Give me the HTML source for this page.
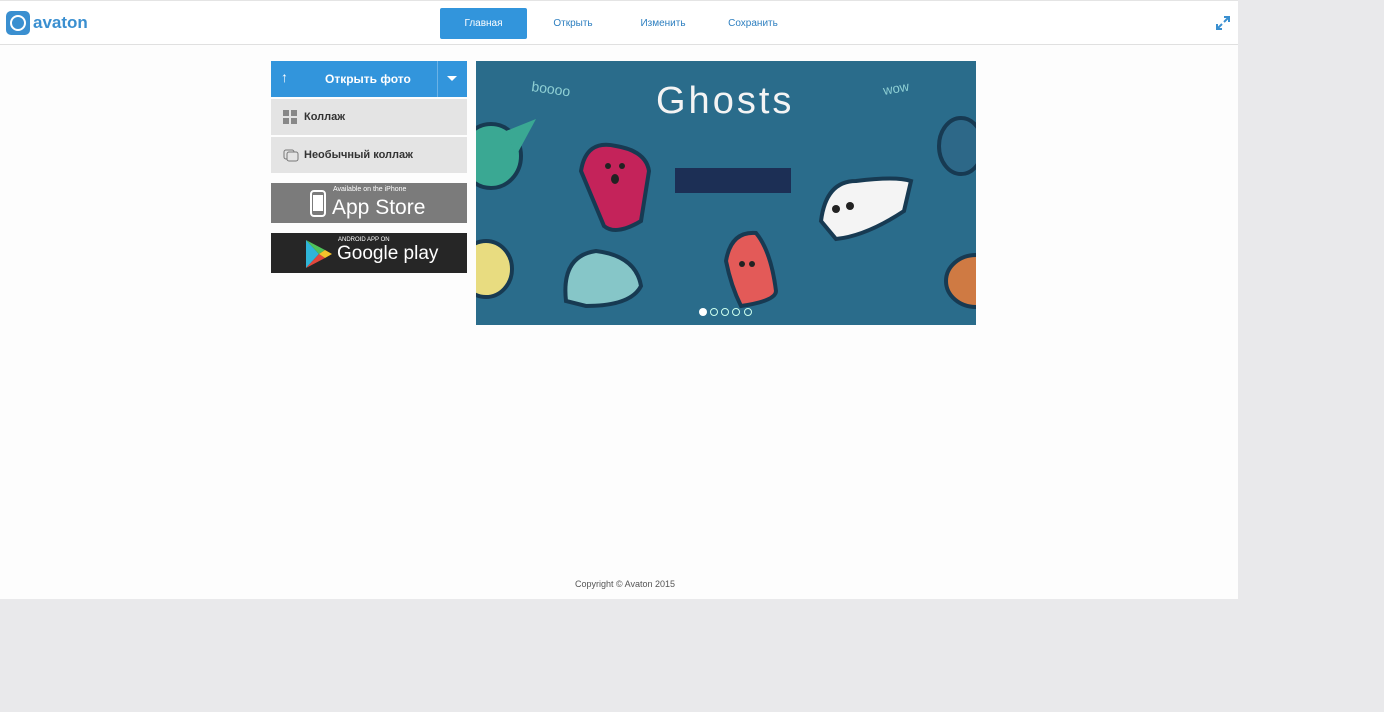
<!DOCTYPE html>
<html><head><meta charset="utf-8"><style>
*{margin:0;padding:0;box-sizing:border-box}
body{width:1384px;height:712px;background:#e9e9eb;font-family:"Liberation Sans",sans-serif;position:relative;overflow:hidden}
#page{position:absolute;left:0;top:0;width:1238px;height:599px;background:#fdfdfd}
#hdr{position:absolute;left:0;top:0;width:1238px;height:45px;border-bottom:1px solid #e0e0e0;border-top:1px solid #e4e4e4;background:#fff}
.logo{position:absolute;left:6px;top:10px;display:flex;align-items:center}
.logo .ic{width:24px;height:24px;border-radius:5px;background:#3a8fd0;position:relative}
.logo .ic:after{content:"";position:absolute;left:4px;top:4px;width:12px;height:12px;border:2.5px solid #fff;border-radius:50%}
.logo span{font-weight:bold;color:#3a8fd0;font-size:17px;margin-left:3px}
.nav{position:absolute;top:7px;height:31px;font-size:10px;color:#2d7fc0;line-height:31px;text-align:center}
.nav.a{background:#3295dc;color:#fff;border-radius:2px}
.btn{position:absolute;left:271px;width:196px}
.lst{background:#e4e4e4;height:36px;font-size:11px;color:#333;font-weight:bold;display:flex;align-items:center;padding-left:12px}
.foot{position:absolute;left:575px;top:579px;font-size:9px;color:#555}
</style></head><body>
<div id="page">
<div id="hdr">
<div class="logo"><div class="ic"></div><span>avaton</span></div>
<div class="nav a" style="left:440px;width:87px">Главная</div>
<div class="nav" style="left:545px;width:56px">Открыть</div>
<div class="nav" style="left:633px;width:60px">Изменить</div>
<div class="nav" style="left:722px;width:62px">Сохранить</div>
<svg style="position:absolute;left:1215px;top:14px" width="16" height="16" viewBox="0 0 16 16"><path d="M9 2h5v5M14 2l-5 5M7 14H2V9M2 14l5-5" stroke="#3a8fd0" stroke-width="2" fill="none"/></svg>
</div>

<div class="btn" style="top:61px;height:36px;background:#3295dc;color:#fff;font-size:12px;font-weight:bold">
<span style="position:absolute;left:10px;top:8px;font-size:14px">&#8593;</span>
<span style="position:absolute;left:54px;top:11px">Открыть фото</span>
<div style="position:absolute;left:166px;top:0;width:1px;height:36px;background:#6bb2e6"></div>
<span style="position:absolute;left:176px;top:15px;border:5px solid transparent;border-top:5px solid #fff"></span>
</div>
<div class="btn lst" style="top:99px"><svg width="14" height="14" style="margin-right:7px"><rect x="0" y="0" width="6" height="6" fill="#888"/><rect x="8" y="0" width="6" height="6" fill="#888"/><rect x="0" y="8" width="6" height="6" fill="#888"/><rect x="8" y="8" width="6" height="6" fill="#888"/></svg>Коллаж</div>
<div class="btn lst" style="top:137px"><svg width="16" height="14" style="margin-right:5px"><rect x="1" y="2" width="10" height="9" rx="2" fill="none" stroke="#777"/><rect x="4" y="4" width="11" height="9" rx="2" fill="#e4e4e4" stroke="#777"/></svg>Необычный коллаж</div>
<div class="btn" style="top:183px;height:40px;background:#7b7b7b;color:#fff">
<svg style="position:absolute;left:39px;top:7px" width="16" height="27"><rect x="1" y="1" width="14" height="25" rx="3" fill="none" stroke="#fff" stroke-width="2"/><rect x="3" y="5" width="10" height="16" fill="#fff"/></svg>
<span style="position:absolute;left:62px;top:3px;font-size:7px">Available on the iPhone</span>
<span style="position:absolute;left:61px;top:13px;font-size:21px">App Store</span>
</div>
<div class="btn" style="top:233px;height:40px;background:#262626;color:#fff">
<svg style="position:absolute;left:34px;top:6px" width="28" height="30"><polygon points="1,1 1,29 14,15" fill="#2fb5d8"/><polygon points="1,1 20,11 14,15" fill="#4fc25a"/><polygon points="1,29 20,19 14,15" fill="#e2473c"/><polygon points="20,11 27,15 20,19 14,15" fill="#f5c32b"/></svg>
<span style="position:absolute;left:67px;top:4px;font-size:6px">ANDROID APP ON</span>
<span style="position:absolute;left:66px;top:10px;font-size:19px">Google play</span>
</div>

<svg style="position:absolute;left:476px;top:61px" width="500" height="264" viewBox="0 0 500 264">
<rect width="500" height="264" fill="#2a6c8b"/>
<text x="180" y="52" font-family="Liberation Sans" font-size="38" fill="#f4f4f4" letter-spacing="3">Ghosts</text>
<text x="55" y="30" font-size="14" fill="#8fd0d4" transform="rotate(8 55 30)">boooo</text>
<text x="408" y="34" font-size="13" fill="#8fd0d4" transform="rotate(-10 408 34)">wow</text>
<rect x="199" y="107" width="116" height="25" fill="#1c2f55"/>
<ellipse cx="15" cy="95" rx="30" ry="32" fill="#3aa893" stroke="#173a52" stroke-width="4"/><path d="M30 70 L60 58 40 95Z" fill="#3aa893"/>
<path d="M105 110 Q110 78 140 85 Q170 90 173 110 L165 160 Q140 175 128 165 Z" fill="#c4235a" stroke="#173a52" stroke-width="4"/>
<circle cx="132" cy="105" r="3" fill="#222"/><circle cx="146" cy="105" r="3" fill="#222"/><ellipse cx="139" cy="118" rx="4" ry="5" fill="#222"/>
<ellipse cx="485" cy="85" rx="22" ry="28" fill="#2d6888" stroke="#173a52" stroke-width="4"/>
<path d="M345 160 Q350 120 380 120 Q420 115 435 120 L428 150 Q390 175 360 178 Z" fill="#f4f4f4" stroke="#173a52" stroke-width="4"/>
<circle cx="360" cy="148" r="4" fill="#222"/><circle cx="374" cy="145" r="4" fill="#222"/>
<path d="M90 240 Q85 195 120 190 Q160 195 165 225 Q155 245 110 245 Z" fill="#86c6c8" stroke="#173a52" stroke-width="4"/>
<ellipse cx="10" cy="208" rx="26" ry="28" fill="#e8dc80" stroke="#173a52" stroke-width="4"/>
<path d="M250 200 Q255 170 280 172 Q295 190 300 230 Q300 240 265 245 Q255 225 250 200Z" fill="#e35a58" stroke="#173a52" stroke-width="4"/>
<circle cx="266" cy="203" r="3" fill="#222"/><circle cx="276" cy="203" r="3" fill="#222"/>
<ellipse cx="500" cy="220" rx="30" ry="26" fill="#cf7a43" stroke="#173a52" stroke-width="4"/>
<circle cx="227" cy="251" r="4" fill="#fff"/>
<circle cx="238" cy="251" r="3.5" fill="none" stroke="#cfe" stroke-width="1"/>
<circle cx="249" cy="251" r="3.5" fill="none" stroke="#cfe" stroke-width="1"/>
<circle cx="260" cy="251" r="3.5" fill="none" stroke="#cfe" stroke-width="1"/>
<circle cx="272" cy="251" r="3.5" fill="none" stroke="#cfe" stroke-width="1"/>
</svg>
<div class="foot">Copyright © Avaton 2015</div>
</div>
</body></html>
